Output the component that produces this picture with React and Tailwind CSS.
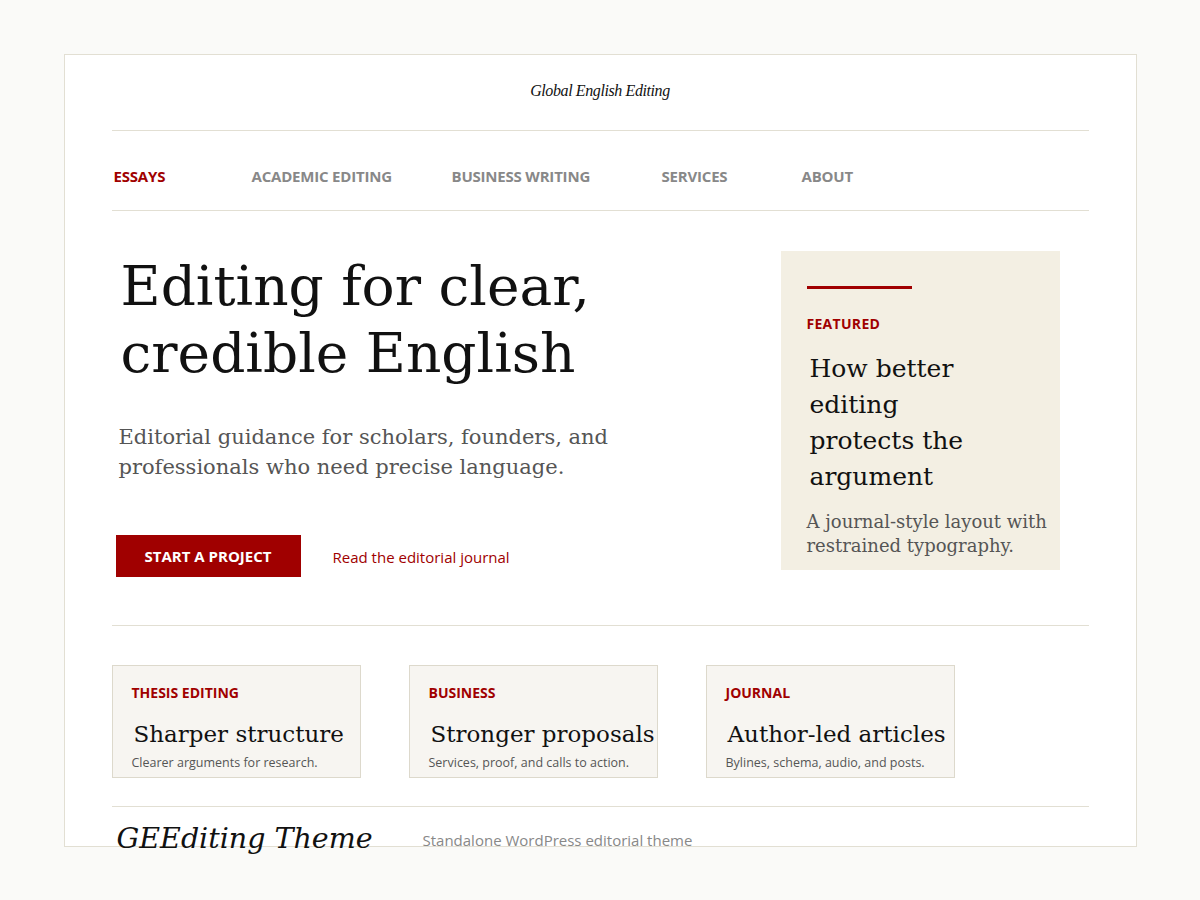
import React from "react";

const serif = { fontFamily: '"DejaVu Serif", Georgia, serif' };

const navItems = [
  { label: "ESSAYS", w: "w-[138px]", active: true },
  { label: "ACADEMIC EDITING", w: "w-[200px]" },
  { label: "BUSINESS WRITING", w: "w-[210px]" },
  { label: "SERVICES", w: "w-[140px]" },
  { label: "ABOUT", w: "w-[120px]" },
];

const cards = [
  { tag: "THESIS EDITING", title: "Sharper structure", text: "Clearer arguments for research." },
  { tag: "BUSINESS", title: "Stronger proposals", text: "Services, proof, and calls to action." },
  { tag: "JOURNAL", title: "Author-led articles", text: "Bylines, schema, audio, and posts." },
];

export default function App() {
  return (
    <div className="min-h-[900px] bg-[#fafaf8] pt-[54px] font-['Open_Sans',sans-serif]">
      <div className="mx-auto h-[793px] w-[1073px] border border-[#e2dfd3] bg-white px-[47px]">
        {/* Masthead */}
        <header className="flex h-[76px] items-center justify-center border-b border-[#e2dfd3] pb-[4px]">
          <span className="font-['Liberation_Serif',serif] text-[16px] italic tracking-[-0.4px] text-[#111]">
            Global English Editing
          </span>
        </header>

        {/* Navigation */}
        <nav className="flex h-[80px] items-center border-b border-[#e2dfd3] pl-[2px] pt-[10px]">
          {navItems.map((item) => (
            <a
              key={item.label}
              className={`${item.w} text-[15px] font-bold leading-5 tracking-[-0.2px] ${item.active ? "text-[#a00000]" : "text-[#888]"}`}
            >
              {item.label}
            </a>
          ))}
        </nav>

        {/* Hero */}
        <section className="flex items-start justify-between border-b border-[#e2dfd3] pb-[48px] pr-[29px] pt-[40px]">
          <div className="pl-[4px] pt-[2px]">
            <h1 style={serif} className="pl-[5px] text-[55px] leading-[67px] text-[#111]">
              Editing for clear,
              <br />
              credible English
            </h1>
            <p style={serif} className="mt-[35px] pl-[3px] text-[21px] leading-[30px] text-[#555]">
              Editorial guidance for scholars, founders, and
              <br />
              professionals who need precise language.
            </p>
            <div className="mt-[53px] flex items-center gap-[32px]">
              <a className="flex h-[42px] w-[185px] items-center justify-center bg-[#a00000] text-[15px] font-bold text-white">
                START A PROJECT
              </a>
              <a className="pt-[3px] text-[15px] text-[#a00000]">Read the editorial journal</a>
            </div>
          </div>

          <aside className="w-[279px] bg-[#f3efe3] pb-[12px] pl-[26px] pr-[8px] pt-[35px]">
            <div className="h-[3px] w-[105px] bg-[#a00000]" />
            <div className="mt-[24px] text-[14px] font-bold tracking-[0.3px] text-[#a00000]">FEATURED</div>
            <h2 style={serif} className="mt-[17px] pl-[3px] text-[25px] leading-[36px] text-[#111]">
              How better
              <br />
              editing
              <br />
              protects the
              <br />
              argument
            </h2>
            <p style={serif} className="mt-[15px] text-[18px] leading-[24px] text-[#555]">
              A journal-style layout with restrained typography.
            </p>
          </aside>
        </section>

        {/* Cards */}
        <section className="flex gap-[48px] border-b border-[#e2dfd3] pb-[28px] pt-[39px]">
          {cards.map((c) => (
            <div key={c.tag} className="h-[113px] w-[249px] border border-[#ddd9cc] bg-[#f7f5f1] px-[19px] pt-[16px]">
              <div className="text-[14px] font-bold text-[#a00000]">{c.tag}</div>
              <h3 style={serif} className="mt-[16px] whitespace-nowrap pl-[2px] text-[23px] leading-[30px] text-[#111]">
                {c.title}
              </h3>
              <p className="mt-[6px] text-[12.5px] leading-[16px] text-[#555]">{c.text}</p>
            </div>
          ))}
        </section>

        {/* Footer */}
        <footer className="flex items-center pl-[5px] pt-[12px]">
          <span style={serif} className="w-[306px] text-[28.5px] italic leading-[40px] text-[#111]">
            GEEditing Theme
          </span>
          <span className="pt-[2px] text-[15px] text-[#888]">Standalone WordPress editorial theme</span>
        </footer>
      </div>
    </div>
  );
}
